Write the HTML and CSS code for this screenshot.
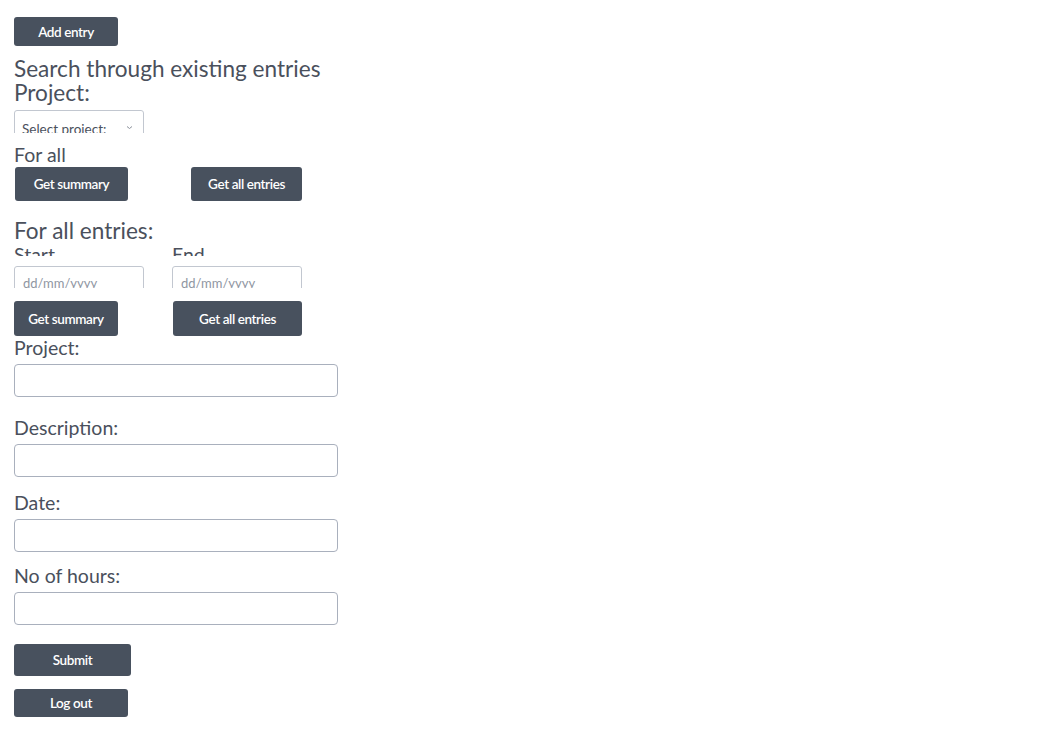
FILE: index.html
```html
<!DOCTYPE html>
<html>
<head>
<meta charset="utf-8">
<link rel="stylesheet" href="styles.css">
</head>
<body>
<div class="page">
  <button class="btn btn-add">Add entry</button>
  <div class="heading heading-search">Search through existing entries</div>
  <div class="heading">Project:</div>
  <div class="clip clip-select">
    <div class="fake-select">Select project:<span class="chev"><svg width="7" height="5" viewBox="0 0 7 5"><path d="M1 1.5 L3.5 3.5 L6 1.5" fill="none" stroke="#8a909a" stroke-width="1"/></svg></span></div>
  </div>
  <div class="sub">For all</div>
  <div class="row row-forall">
    <button class="btn btn-sum1">Get summary</button>
    <button class="btn btn-all1">Get all entries</button>
  </div>
  <div class="heading heading-entries">For all entries:</div>
  <div class="clip clip-labels">
    <span class="lbl-col">Start</span>
    <span class="lbl-col">End</span>
  </div>
  <div class="row row-dates">
    <div class="clip clip-date"><div class="fake-date">dd/mm/yyyy</div></div>
    <div class="clip clip-date"><div class="fake-date">dd/mm/yyyy</div></div>
  </div>
  <div class="row row-range">
    <button class="btn btn-sum2">Get summary</button>
    <button class="btn btn-all2">Get all entries</button>
  </div>
  <div class="field field-first">
    <div class="flabel">Project:</div>
    <input class="finput" type="text">
  </div>
  <div class="field field-desc">
    <div class="flabel">Description:</div>
    <input class="finput" type="text">
  </div>
  <div class="field field-date">
    <div class="flabel">Date:</div>
    <input class="finput" type="text">
  </div>
  <div class="field field-hours">
    <div class="flabel">No of hours:</div>
    <input class="finput" type="text">
  </div>
  <button class="btn btn-submit">Submit</button>
  <button class="btn btn-logout">Log out</button>
</div>
</body>
</html>
```
FILE: styles.css
```css
html, body {
  margin: 0;
  padding: 0;
  background: #ffffff;
}
body {
  font-family: Lato, "Open Sans", sans-serif;
  color: #4a505c;
}
.page {
  padding: 17px 0 0 14px;
  display: flex;
  flex-direction: column;
  align-items: flex-start;
}
.btn {
  display: block;
  border: none;
  border-radius: 3px;
  background: #48515e;
  color: #ffffff;
  font-family: Lato, "Open Sans", sans-serif;
  font-size: 13.5px;
  font-weight: 600;
  letter-spacing: -0.4px;
  padding: 0;
  margin: 0;
  cursor: pointer;
}
.btn-add { width: 104px; height: 29px; }
.heading {
  font-size: 22.6px;
  line-height: 24px;
}
.heading-search { margin-top: 11px; }
.clip { overflow: hidden; }
.clip-select {
  margin-top: 5px;
  width: 130px;
  height: 23px;
}
.fake-select {
  box-sizing: border-box;
  height: 34px;
  border: 1px solid #c2c7d0;
  border-radius: 3px;
  font-size: 13.5px;
  padding: 10px 0 0 7px;
  line-height: 16px;
  color: #4a505c;
  position: relative;
}
.chev {
  position: absolute;
  right: 10px;
  top: 6px;
}
.sub {
  font-size: 19.5px;
  line-height: 22px;
  margin-top: 11px;
}
.row {
  display: flex;
}
.row-forall {
  margin-top: 1px;
  gap: 63px;
}
.btn-sum1 { width: 113px; height: 34px; margin-left: 1px; }
.btn-all1 { width: 111px; height: 34px; }
.heading-entries {
  margin-top: 18px;
}
.clip-labels {
  height: 13px;
  display: flex;
}
.lbl-col {
  width: 158px;
  font-size: 19.5px;
  line-height: 22px;
  display: block;
  margin-top: 1px;
}
.row-dates {
  margin-top: 10px;
  gap: 28px;
}
.clip-date {
  width: 130px;
  height: 22px;
}
.fake-date {
  box-sizing: border-box;
  height: 34px;
  border: 1px solid #c2c7d0;
  border-radius: 3px;
  font-size: 13px;
  line-height: 16px;
  padding: 8px 0 0 8px;
  color: #8f96a2;
}
.row-range {
  margin-top: 13px;
  gap: 55px;
}
.btn-sum2 { width: 104px; height: 35px; }
.btn-all2 { width: 129px; height: 35px; }
.field {
  display: flex;
  flex-direction: column;
}
.field-first { margin-top: 2px; }
.field-desc { margin-top: 21px; }
.field-date { margin-top: 16px; }
.field-hours { margin-top: 14px; }
.flabel {
  font-size: 19.5px;
  line-height: 20px;
  height: 26px;
}
.finput {
  box-sizing: border-box;
  width: 324px;
  height: 33px;
  border: 1px solid #a9b0bd;
  border-radius: 4px;
  margin: 0;
  padding: 0 8px;
  font-family: Lato, sans-serif;
  font-size: 14px;
}
.btn-submit {
  margin-top: 19px;
  width: 117px;
  height: 32px;
}
.btn-logout {
  margin-top: 13px;
  width: 114px;
  height: 28px;
}
```
